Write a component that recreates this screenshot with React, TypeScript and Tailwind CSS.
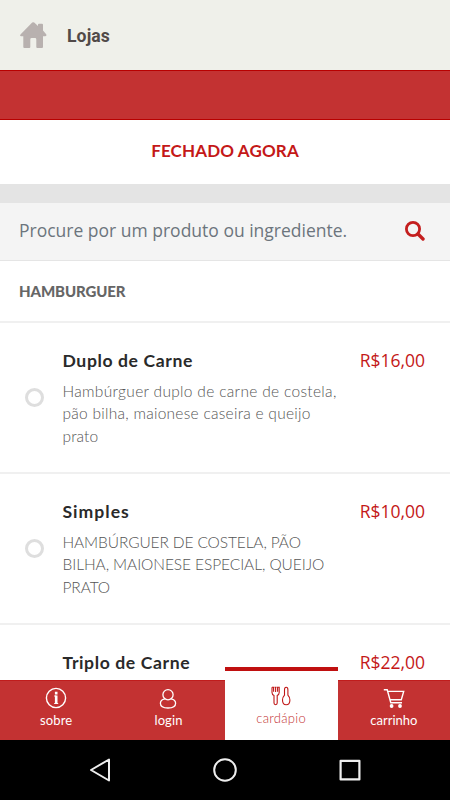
import type { ReactNode } from 'react'

interface Line {
  text: string
  tracking: string
}

interface Product {
  name: string
  nameTracking: string
  price: string
  lines: Line[]
}

const products: Product[] = [
  {
    name: 'Duplo de Carne',
    nameTracking: 'tracking-[0.6px]',
    price: 'R$16,00',
    lines: [
      { text: 'Hambúrguer duplo de carne de costela,', tracking: 'tracking-[0.32px]' },
      { text: 'pão bilha, maionese caseira e queijo', tracking: 'tracking-[0.27px]' },
      { text: 'prato', tracking: 'tracking-[0.1px]' },
    ],
  },
  {
    name: 'Simples',
    nameTracking: 'tracking-[1px]',
    price: 'R$10,00',
    lines: [
      { text: 'HAMBÚRGUER DE COSTELA, PÃO', tracking: 'tracking-[-0.12px]' },
      { text: 'BILHA, MAIONESE ESPECIAL, QUEIJO', tracking: 'tracking-[-0.08px]' },
      { text: 'PRATO', tracking: 'tracking-[-0.1px]' },
    ],
  },
  {
    name: 'Triplo de Carne',
    nameTracking: 'tracking-[0.6px]',
    price: 'R$22,00',
    lines: [],
  },
]

function HomeIcon() {
  return (
    <svg className="h-[27px] w-[27px]" viewBox="0 0 27 27" fill="#b8b1af">
      <path d="M12.2.6Q13.2-.2 14.2.6L18 4V2.8Q18 1.8 19 1.8H22Q23 1.8 23 2.8V8.5L26.2 12.2Q27 14.2 25 14.2H23V25Q23 26 22 26H17.3Q16.3 26 16.3 25V17.4Q16.3 16 15 16H11.6Q10.3 16 10.3 17.4V25Q10.3 26 9.3 26H4.3Q3.3 26 3.3 25V14.2H1.3Q-.8 14.2.7 12.2Z" />
    </svg>
  )
}

function SearchIcon() {
  return (
    <svg className="h-5 w-5" viewBox="0 0 20 20" fill="none" stroke="#c41e1e">
      <circle cx="8" cy="8" r="6.6" strokeWidth="2.8" />
      <path d="m13 13 5 5" strokeWidth="3.4" strokeLinecap="round" />
    </svg>
  )
}

function ProductRow({ product }: { product: Product }) {
  return (
    <div className="flex h-[151.2px] shrink-0 border-b-2 border-[#f0f0f0] pr-[25px] pl-[25px]">
      <div className="mt-[65px] h-[19px] w-[19px] shrink-0 rounded-full border-[3px] border-[#dedede]" />
      <div className="ml-[18.5px] min-w-0 flex-1 pt-[25.5px] whitespace-nowrap">
        <div className={`text-[17.6px] leading-6 font-bold text-[#2a2a2a] ${product.nameTracking}`}>
          {product.name}
        </div>
        <div className="mt-[7px] font-light text-[#555]">
          {product.lines.map((line) => (
            <div key={line.text} className={`text-[15.5px] leading-[22.5px] ${line.tracking}`}>
              {line.text}
            </div>
          ))}
        </div>
      </div>
      <div className="pt-[25px] font-['Open_Sans',sans-serif] text-[17.5px] leading-6 text-[#c41818]">
        {product.price}
      </div>
    </div>
  )
}

function Tab({ label, tracking, children }: { label: string; tracking: string; children: ReactNode }) {
  return (
    <div className="flex flex-1 flex-col items-center border-t border-[#c01c1c] bg-[#c33232] pt-[5px] text-white">
      {children}
      <span className={`mt-[1px] text-[13px] leading-[18px] ${tracking}`}>{label}</span>
    </div>
  )
}

export default function App() {
  return (
    <div className="flex h-[800px] w-[450px] flex-col overflow-hidden bg-white font-[Lato,sans-serif]">
      <header className="flex h-[70px] shrink-0 items-center bg-[#eff0ea] pl-5">
        <HomeIcon />
        <span className="ml-5 pt-[2px] font-[Roboto,sans-serif] text-[17.6px] font-bold tracking-[0.1px] text-[#514a48]">
          Lojas
        </span>
      </header>
      <div className="h-[50px] shrink-0 border-y border-[#b80000] bg-[#c33232]" />
      <div className="flex h-16 shrink-0 items-center justify-center pb-[2px] text-[17px] font-bold tracking-[0.15px] text-[#c41818]">
        FECHADO AGORA
      </div>
      <div className="h-[19px] shrink-0 bg-[#e4e4e4]" />
      <div className="flex h-[58px] shrink-0 items-center justify-between border-b border-[#e5e5e5] bg-[#f4f4f4] pr-[25px] pb-[2px] pl-[19px]">
        <span className="font-['Open_Sans',sans-serif] text-[17.5px] text-[#6c757d]">
          Procure por um produto ou ingrediente.
        </span>
        <SearchIcon />
      </div>
      <div className="flex h-[62px] shrink-0 items-center border-b-2 border-[#f0f0f0] pl-[19px] text-[15px] font-black tracking-[-0.1px] text-[#666]">
        HAMBURGUER
      </div>

      <main className="flex h-[357px] shrink-0 flex-col overflow-hidden">
        {products.map((product) => (
          <ProductRow key={product.name} product={product} />
        ))}
      </main>

      <nav className="flex h-[60px] shrink-0">
        <Tab label="sobre" tracking="tracking-[0.1px]">
          <svg className="h-6 w-6" viewBox="0 0 24 24" fill="none" stroke="currentColor">
            <circle cx="12" cy="12" r="9.6" strokeWidth="1.4" />
            <path d="M12.2 5.8v2.6M12.2 9.6v8.2" strokeWidth="2.6" />
            <path d="M10.2 10h2M10.2 17.5h4" />
          </svg>
        </Tab>
        <Tab label="login" tracking="tracking-[0.1px]">
          <svg className="h-6 w-6" viewBox="0 0 24 24" fill="none" stroke="currentColor" strokeWidth="1.3">
            <circle cx="12" cy="8.7" r="5.1" />
            <path d="M8.9 12.8C6 13.4 4.4 15.2 4.4 17.2c0 3.2 3.2 4.8 7.6 4.8s7.6-1.6 7.6-4.8c0-2-1.6-3.8-4.5-4.4" />
          </svg>
        </Tab>
        {/* a aba ativa sobe acima da barra */}
        <div className="relative z-10 -mt-[13px] flex w-[113px] shrink-0 flex-col items-center border-t-4 border-[#c01010] bg-white pt-[13px] text-[#c33232]">
          <svg className="h-6 w-6" viewBox="0 0 24 24" fill="none" stroke="#c01818" strokeWidth="1.1">
            <path d="M3 3.3v5.2c0 1.6.7 2.4 2 3v7.6q0 1.6 1.6 1.6t1.6-1.6v-7.6c1.3-.6 2-1.4 2-3V3.3H8.6v4.5M6.6 3.3v4.8M4.6 7.8V3.3H3M5.6 3.3h2M17.2 3.3c-1.4 0-1.7 1.2-1.7 2.5v5.4c-1.3 1.4-2 3-2 4.8 0 2.8 1.4 4.8 3.7 4.8s3.7-2 3.7-4.8c0-1.8-.7-3.4-2-4.8V5.8c0-1.3-.3-2.5-1.7-2.5Z" />
          </svg>
          <span className="mt-px text-[13px] leading-[18px] font-light tracking-[0.3px]">cardápio</span>
        </div>
        <Tab label="carrinho" tracking="tracking-[0px]">
          <svg className="h-6 w-6" viewBox="0 0 24 24" fill="none" stroke="currentColor" strokeWidth="1.4">
            <path d="M1.8 3.7h3.4l3.6 13h11.2M5.7 5.4h16l-2.4 8.4H8" />
            <circle cx="9.6" cy="20" r="1.2" fill="currentColor" />
            <circle cx="18" cy="20" r="1.2" fill="currentColor" />
          </svg>
        </Tab>
      </nav>

      <div className="flex h-[60px] shrink-0 items-center justify-center gap-[101px] bg-black">
        <svg className="h-6 w-6" viewBox="0 0 24 24" fill="none" stroke="#eee" strokeWidth="2" strokeLinejoin="round">
          <path d="M21 1.5v21L3 12Z" />
        </svg>
        <svg className="h-6 w-6" viewBox="0 0 24 24" fill="none" stroke="#eee" strokeWidth="2">
          <circle cx="12" cy="12" r="10.8" />
        </svg>
        <svg className="h-6 w-6" viewBox="0 0 24 24" fill="none" stroke="#eee" strokeWidth="2.2" strokeLinejoin="round">
          <path d="M2.6 2.8h18.8v18.6H2.6Z" />
        </svg>
      </div>
    </div>
  )
}
